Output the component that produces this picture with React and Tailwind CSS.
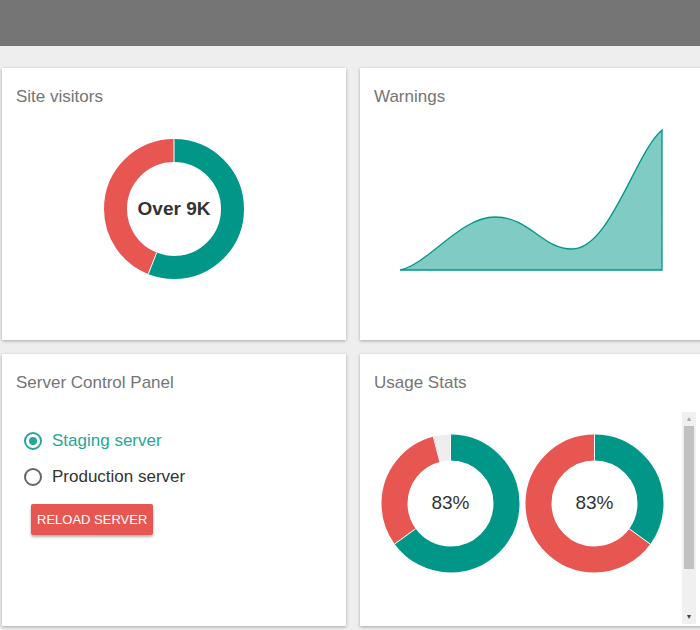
const TEAL = "#009688";
const RED = "#e85652";

function Donut({ size, r, w, segs, label, bold }) {
  const c = 2 * Math.PI * r;
  let acc = 0;
  return (
    <div className="relative flex items-center justify-center" style={{ width: size, height: size }}>
      <svg width={size} height={size} className="absolute inset-0 -rotate-90">
        {segs.map((s, i) => {
          const el = (
            <circle key={i} cx={size / 2} cy={size / 2} r={r} fill="none" stroke={s.color} strokeWidth={w}
              strokeDasharray={`${(s.pct / 100) * c} ${c}`} strokeDashoffset={-(acc / 100) * c} />
          );
          acc += s.pct;
          return el;
        })}
        {segs.map((s, i) => {
          const a = (segs.slice(0, i).reduce((t, x) => t + x.pct, 0) / 100) * 2 * Math.PI;
          const m = size / 2;
          return <line key={"l" + i} x1={m + (r - w / 2) * Math.cos(a)} y1={m + (r - w / 2) * Math.sin(a)} x2={m + (r + w / 2) * Math.cos(a)} y2={m + (r + w / 2) * Math.sin(a)} stroke="#fff" strokeWidth="1" />;
        })}
      </svg>
      <span className={`relative text-[#333] text-[19px] ${bold ? "font-bold" : ""}`}>{label}</span>
    </div>
  );
}

function Card({ title, children }) {
  return (
    <div className="bg-white h-[272px] shadow-[0_1px_3px_rgba(0,0,0,0.3)] flex flex-col">
      <div className="pl-[14px] pt-[18px] text-[17px] text-[#757575] leading-[22px]">{title}</div>
      {children}
    </div>
  );
}

export default function App() {
  return (
    <div className="w-[700px] h-[630px] bg-[#eeeeee] overflow-hidden" style={{ fontFamily: "'Liberation Sans', Arial, sans-serif" }}>
      <div className="h-[46px] bg-[#757575]" />
      <div className="grid grid-cols-[344px_344px] gap-[14px] pl-[2px] pt-[22px]">
        <Card title="Site visitors">
          <div className="flex justify-center pt-[31px]">
            <Donut size={140} r={58.5} w={23} bold label="Over 9K" segs={[{ pct: 56, color: TEAL }, { pct: 44, color: RED }]} />
          </div>
        </Card>
        <Card title="Warnings">
          <svg width="344" height="200">
            <path d="M40 162 C 70 155, 100 109, 135 109 C 170 109, 182 141, 212 141 C 250 141, 275 45, 302 22 L302 162 Z" fill="#80cbc4" stroke={TEAL} strokeWidth="1.3" />
          </svg>
        </Card>
        <Card title="Server Control Panel">
          <div className="px-[22px] pt-[36px] flex flex-col gap-[14px] text-[17px]">
            <label className="flex items-center gap-[10px] text-[#26a69a] leading-[22px]">
              <span className="w-[18px] h-[18px] rounded-full border-2 border-[#26a69a] flex items-center justify-center">
                <span className="w-[8px] h-[8px] rounded-full bg-[#26a69a]" />
              </span>
              Staging server
            </label>
            <label className="flex items-center gap-[10px] text-[#333] leading-[22px]">
              <span className="w-[18px] h-[18px] rounded-full border-2 border-[#666]" />
              Production server
            </label>
            <button className="self-start ml-[7px] mt-[2px] bg-[#e85652] text-white text-[13px] px-[6px] h-[31px] rounded-[2px] shadow-[0_2px_3px_rgba(0,0,0,0.3)]">RELOAD SERVER</button>
          </div>
        </Card>
        <Card title="Usage Stats">
          <div className="flex pt-[18px]">
            <div className="flex gap-[5px] pl-[21px] pt-[22px]">
              <Donut size={139} r={56} w={26} label="83%" segs={[{ pct: 65, color: TEAL }, { pct: 31, color: RED }, { pct: 4, color: "#eeeeee" }]} />
              <Donut size={139} r={56} w={26} label="83%" segs={[{ pct: 35, color: TEAL }, { pct: 65, color: RED }]} />
            </div>
            <div className="ml-[18px] w-[14px] h-[212px] bg-[#f0f0f0] flex flex-col items-center">
              <span className="text-[7px] text-[#aaa] leading-[14px]">▲</span>
              <div className="w-[10px] h-[143px] bg-[#c1c1c1]" />
              <div className="flex-1" />
              <span className="text-[7px] text-[#444] leading-[14px]">▼</span>
            </div>
          </div>
        </Card>
      </div>
    </div>
  );
}
